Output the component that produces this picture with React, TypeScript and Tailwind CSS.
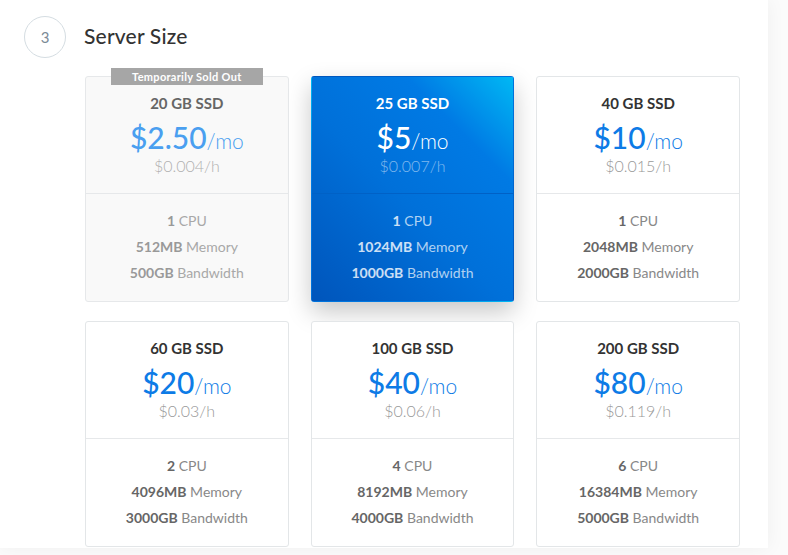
import React from 'react'

interface Plan {
    ssd: string
    price: string
    hourly: string
    cpu: string
    memory: string
    bandwidth: string
    soldOut?: boolean
    featured?: boolean
}

const plans: Plan[] = [
    { ssd: '20 GB SSD', price: '$2.50', hourly: '$0.004/h', cpu: '1', memory: '512MB', bandwidth: '500GB', soldOut: true },
    { ssd: '25 GB SSD', price: '$5', hourly: '$0.007/h', cpu: '1', memory: '1024MB', bandwidth: '1000GB', featured: true },
    { ssd: '40 GB SSD', price: '$10', hourly: '$0.015/h', cpu: '1', memory: '2048MB', bandwidth: '2000GB' },
    { ssd: '60 GB SSD', price: '$20', hourly: '$0.03/h', cpu: '2', memory: '4096MB', bandwidth: '3000GB' },
    { ssd: '100 GB SSD', price: '$40', hourly: '$0.06/h', cpu: '4', memory: '8192MB', bandwidth: '4000GB' },
    { ssd: '200 GB SSD', price: '$80', hourly: '$0.119/h', cpu: '6', memory: '16384MB', bandwidth: '5000GB' },
]

function PlanCard({ plan }: { plan: Plan }) {
    const { featured, soldOut } = plan

    let box = 'bg-white border border-[#e3e6e8]'
    let title = 'text-[#333]'
    let price = 'text-[#0d7be6]'
    let hourly = 'text-[#999]'
    let specBold = 'text-[#666]'
    let specLight = 'text-[#888]'
    let divider = 'border-[#e6e8ea]'

    if (featured) {
        box = 'bg-[linear-gradient(45deg,#0055bb_0%,#0070d9_45%,#007ae4_75%,#00b8f4_100%)] shadow-[0_10px_24px_rgba(0,0,0,0.22)] border border-transparent'
        title = 'text-white'
        price = 'text-white'
        hourly = 'text-white/50'
        specBold = 'text-white/80'
        specLight = 'text-white/70'
        divider = 'border-[#0061c6]'
    } else if (soldOut) {
        box = 'bg-[#f9f9f9] border border-[#e6e8ea]'
        title = 'text-[#666]'
        price = 'text-[#4a9ff0]'
        hourly = 'text-[#b0b0b0]'
        specBold = 'text-[#999]'
        specLight = 'text-[#a8a8a8]'
    }

    return (
        <div className={`relative h-[226px] rounded-[3px] flex flex-col ${box}`}>
            {soldOut && (
                <div className="absolute left-1/2 -translate-x-1/2 -top-[9px] w-[152px] h-[17px] bg-[#a6a6a6] text-white text-[11px] font-bold leading-[17px] text-center tracking-[0.3px]">
                    Temporarily Sold Out
                </div>
            )}
            <div className={`h-[117px] border-b ${divider} flex flex-col items-center pt-[16px]`}>
                <div className={`text-[15px] font-bold leading-5 ${title}`}>{plan.ssd}</div>
                <div className={`mt-[9px] text-[30px] font-medium leading-[30px] ${price}`}>
                    {plan.price}
                    <span className="text-[21px] font-light">/mo</span>
                </div>
                <div className={`text-[16px] font-light leading-5 ${hourly}`}>{plan.hourly}</div>
            </div>
            <div className="flex flex-col items-center pt-[14px] text-[14px] leading-[26px]">
                <div><span className={`font-bold ${specBold}`}>{plan.cpu}</span> <span className={specLight}>CPU</span></div>
                <div><span className={`font-bold ${specBold}`}>{plan.memory}</span> <span className={specLight}>Memory</span></div>
                <div><span className={`font-bold ${specBold}`}>{plan.bandwidth}</span> <span className={specLight}>Bandwidth</span></div>
            </div>
        </div>
    )
}

export default function App() {
    return (
        <div className="w-[788px] h-[555px] overflow-hidden bg-[#fbfbfb] font-['Lato','Open_Sans',sans-serif]">
            <div className="w-[768px] h-[548px] bg-white shadow-[0_0_18px_rgba(0,0,0,0.05)]">
                <div className="flex items-center pt-[16px] pl-[24px] gap-[18px]">
                    <div className="w-[42px] h-[42px] rounded-full border border-[#d5dde2] flex items-center justify-center text-[15px] text-[#7b8a96]">
                        3
                    </div>
                    <h2 className="text-[21px] font-medium text-[#333] tracking-[0.2px] -mt-[2px]">Server Size</h2>
                </div>
                <div className="grid grid-cols-3 gap-x-[22px] gap-y-[19px] ml-[85px] w-[655px] mt-[18px]">
                    {plans.map((plan) => (
                        <PlanCard key={plan.ssd} plan={plan} />
                    ))}
                </div>
            </div>
        </div>
    )
}
